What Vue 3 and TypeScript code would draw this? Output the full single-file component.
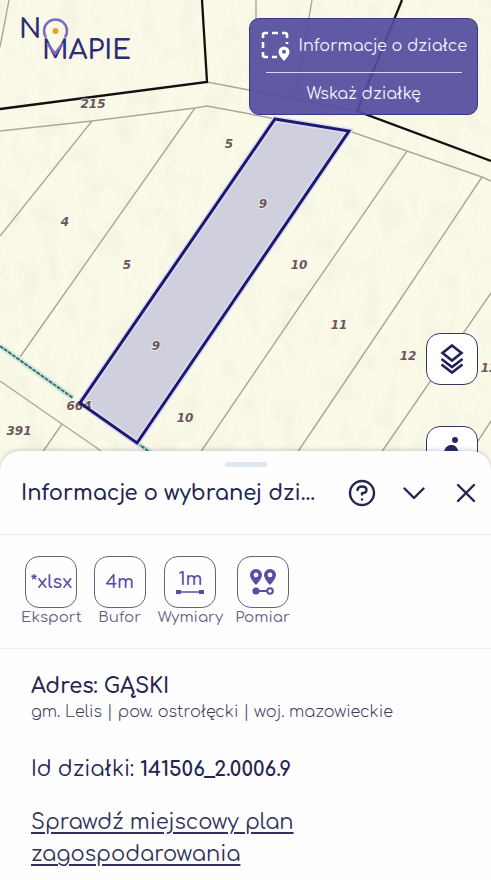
<script setup lang="ts">
interface MapLabel {
  text: string
  x: number
  y: number
}

interface Tool {
  id: string
  label: string
  glyph?: string
}

const boundaries: string[] = [
  'M9 0L0 47',
  'M256 0V22',
  'M312 0L295 98',
  'M207 82L249 90L357 111',
  'M0 131L92 121L195 108L207 106L245 113L275 119L349 131L407 151L482 177L491 181',
  'M92 121L0 236',
  'M195 108L60 300L20 357',
  'M407 151L304 300L200 453L170 500',
  'M482 177L400 300L297 453L265 500',
  'M491 293L381 453L350 500',
  'M491 421L440 500',
  'M0 381L62 424L97 448L160 500',
  'M62 424L42 453L10 500',
]

const labels: MapLabel[] = [
  { text: '215', x: 93, y: 108 },
  { text: '5', x: 229, y: 148 },
  { text: '4', x: 65, y: 226 },
  { text: '5', x: 127, y: 269 },
  { text: '9', x: 263, y: 208 },
  { text: '10', x: 299, y: 269 },
  { text: '11', x: 339, y: 329 },
  { text: '12', x: 408, y: 360 },
  { text: '13', x: 489, y: 372 },
  { text: '9', x: 156, y: 350 },
  { text: '664', x: 79, y: 410 },
  { text: '10', x: 185, y: 422 },
  { text: '391', x: 19, y: 435 },
  { text: '392', x: 87, y: 460 },
]

const tools: Tool[] = [
  { id: 'export', label: 'Eksport', glyph: '*xlsx' },
  { id: 'buffer', label: 'Bufor', glyph: '4m' },
  { id: 'dimensions', label: 'Wymiary' },
  { id: 'measure', label: 'Pomiar' },
]
</script>

<template>
  <main class="app">
    <section class="map" aria-label="Mapa działek">
      <svg class="map-canvas" viewBox="0 0 491 500" preserveAspectRatio="xMidYMin slice">
        <defs>
          <filter id="relief" x="0" y="0" width="100%" height="100%">
            <feTurbulence type="fractalNoise" baseFrequency="0.05 0.035" numOctaves="3" seed="4" />
            <feColorMatrix values="0 0 0 0 .55  0 0 0 0 .56  0 0 0 0 .48  .9 0 0 0 -.38" />
          </filter>
        </defs>
        <rect width="491" height="500" fill="#fbfae9" />
        <rect width="491" height="500" filter="url(#relief)" opacity=".35" />
        <path v-for="d in boundaries" :key="d" :d="d" class="boundary" />
        <path d="M0 109L207 82L202 0M402 0L357 111L491 161" class="district" />
        <path d="M0 346L73 398M137 443L160 459" class="stream-glow" />
        <path d="M0 346L73 398M137 443L160 459" class="stream" />
        <path d="M275 119L349 131L137 443L80 403Z" class="plot-glow" />
        <text v-for="l in labels" :key="l.text + l.x" :x="l.x" :y="l.y" class="map-label">{{ l.text }}</text>
        <path d="M275 119L349 131L137 443L80 403Z" class="plot" />
      </svg>

      <a class="logo" href="#" aria-label="Na mapie">
        <svg width="122" height="50" viewBox="0 0 122 50">
          <g class="logo-text">
            <text x="-1" y="23">N</text>
            <text x="22" y="44">MAPIE</text>
          </g>
          <path d="M26 22.500A11.500 11.500 0 1 1 45 22.500" fill="none" stroke="#7d6cc0" stroke-width="2.600" />
          <path d="M27 28L35 38.500L43 28" fill="none" stroke="#7d6cc0" stroke-width="2.600" />
          <circle cx="35.500" cy="16" r="3" fill="#e5a02c" />
        </svg>
      </a>

      <div class="mode">
        <button class="mode-info" type="button">
          <svg width="30" height="30" viewBox="0 0 30 30" fill="none" stroke="#fff" stroke-width="2.600">
            <path d="M2 7V4Q2 2 4 2H7M11 2H17M21 2H24Q26 2 26 4V7M26 11V13M2 11V17M2 21V24Q2 26 4 26H7M11 26H16" />
            <path fill="#fff" fill-rule="evenodd" stroke="none" d="M23 15.500A5.500 5.500 0 0 0 17.500 21C17.500 24.500 23 30 23 30S28.500 24.500 28.500 21A5.500 5.500 0 0 0 23 15.500ZM23 18.800A2 2 0 1 1 23 22.800A2 2 0 1 1 23 18.800Z" />
          </svg>
          Informacje o działce
        </button>
        <button class="mode-pick" type="button">Wskaż działkę</button>
      </div>

      <div class="map-buttons">
        <button class="tile" type="button" aria-label="Warstwy">
          <svg width="24" height="32" viewBox="0 0 24 32" fill="none" stroke="#1f2158" stroke-width="2.600">
            <path d="M12 2.500L21.500 10L12 17.500L2.500 10ZM1.500 16L12 24L22.500 16M1.500 21.500L12 29.500L22.500 21.500" />
          </svg>
        </button>
        <button class="tile" type="button" aria-label="Widok ulicy">
          <svg width="24" height="32" viewBox="0 0 24 32" fill="none" stroke="#26276b" stroke-width="3" stroke-linecap="round">
            <circle cx="15" cy="4" r="3" fill="#26276b" stroke="none" />
            <path d="M5 18Q6 10.500 12 10.500L17 17L21 18M12 12L10 20L15 25V30M9 22L5 30" />
            <path d="M4 18Q5 9 12 9Q17 9 19 17Z" fill="#26276b" stroke="none" />
          </svg>
        </button>
      </div>
    </section>

    <section class="sheet">
      <div class="handle"></div>
      <header class="head">
        <h1>Informacje o wybranej dzi...</h1>
        <div class="actions">
          <button type="button" aria-label="Pomoc">
            <svg width="28" height="28" viewBox="0 0 28 28">
              <circle cx="14" cy="14" r="12" />
              <path d="M9.500 11Q10 7.500 14 7.500Q18.500 7.500 18.500 11Q18.500 14 14 14.200V15.500M14 20.500V20.600" />
            </svg>
          </button>
          <button type="button" aria-label="Zwiń">
            <svg width="28" height="28" viewBox="0 0 28 28"><path d="M4.500 9.500L14 19L23.500 9.500" /></svg>
          </button>
          <button type="button" aria-label="Zamknij">
            <svg width="28" height="28" viewBox="0 0 28 28"><path d="M6 6L22 22M22 6L6 22" /></svg>
          </button>
        </div>
      </header>

      <div class="tools">
        <button v-for="tool in tools" :key="tool.id" class="tool" type="button">
          <span class="tool-box">
            <span v-if="tool.glyph">{{ tool.glyph }}</span>
            <span v-else-if="tool.id === 'dimensions'" class="ruler">
              1m
              <svg width="28" height="6" viewBox="0 0 28 6" fill="#5d4ba5">
                <path d="M0 1H5V5H0ZM23 1H28V5H23ZM5 2.300H23V3.700H5Z" />
              </svg>
            </span>
            <svg v-else width="28" height="28" viewBox="0 0 28 28" fill="#5d4ba5">
              <path fill-rule="evenodd" d="M7 1A6 6 0 0 0 1 7C1 11 7 17 7 17S13 11 13 7A6 6 0 0 0 7 1ZM7 4.500A2.400 2.400 0 1 1 7 9.300A2.400 2.400 0 1 1 7 4.500Z" />
              <path fill-rule="evenodd" d="M21 1A6 6 0 0 0 15 7C15 11 21 17 21 17S27 11 27 7A6 6 0 0 0 21 1ZM21 4.500A2.400 2.400 0 1 1 21 9.300A2.400 2.400 0 1 1 21 4.500Z" />
              <circle cx="7" cy="23" r="3.600" />
              <path d="M7 23H18" stroke="#5d4ba5" stroke-width="2" />
              <circle cx="21" cy="23" r="2.800" fill="#fff" stroke="#5d4ba5" stroke-width="2" />
            </svg>
          </span>
          <span class="tool-label">{{ tool.label }}</span>
        </button>
      </div>

      <div class="details">
        <h2>Adres: GĄSKI</h2>
        <p class="region">gm. Lelis | pow. ostrołęcki | woj. mazowieckie</p>
        <p class="plot-id">Id działki: <strong>141506_2.0006.9</strong></p>
        <a class="plan" href="#">Sprawdź miejscowy plan zagospodarowania</a>
      </div>
    </section>
  </main>
</template>

<style>
body {
  margin: 0;
}
</style>

<style scoped>
.app {
  display: flex;
  flex-direction: column;
  min-height: 100vh;
  overflow: hidden;
  background: #fbfae9;
  color: #23254f;
  font-family: Comfortaa, Quicksand, Lato, sans-serif;
}

button {
  margin: 0;
  padding: 0;
  border: 0;
  background: none;
  color: inherit;
  font: inherit;
  cursor: pointer;
}

svg {
  display: block;
  flex: none;
}

.map {
  position: relative;
  flex: 1;
  min-height: 320px;
}

.map-canvas {
  position: absolute;
  inset: 0;
  width: 100%;
  height: 100%;
}

.boundary {
  fill: none;
  stroke: #a9a89b;
  stroke-width: 1.400;
}

.district {
  fill: none;
  stroke: #11110f;
  stroke-width: 2.300;
}

.stream-glow {
  fill: none;
  stroke: #d3ebe2;
  stroke-width: 6;
}

.stream {
  fill: none;
  stroke: #3f6f60;
  stroke-width: 2;
  stroke-dasharray: 4 1;
}

.plot-glow {
  fill: #d0cfde;
  stroke: #dcdcf8;
  stroke-width: 6;
}

.plot {
  fill: none;
  stroke: #1d1b69;
  stroke-width: 3;
}

.map-label {
  fill: #6b5660;
  stroke: #fbfae9;
  stroke-width: 2;
  stroke-opacity: 0.6;
  paint-order: stroke;
  font: italic bold 12px "DejaVu Sans", sans-serif;
  text-anchor: middle;
}

.logo {
  position: absolute;
  top: 15px;
  left: 20px;
}

.logo-text {
  fill: #2b2c74;
  font-size: 27px;
  font-weight: 600;
}

.mode {
  position: absolute;
  top: 18px;
  right: 13px;
  display: flex;
  flex-direction: column;
  box-sizing: border-box;
  padding: 0 10px 0 11px;
  border: 1px solid #3d3884;
  border-radius: 10px;
  background: rgba(84, 76, 158, 0.93);
  color: #f4f2ff;
  font-size: 16px;
}

.mode-info {
  display: flex;
  align-items: center;
  gap: 8px;
  height: 53px;
}

.mode-pick {
  height: 42px;
  margin: 0 5px;
  border-top: 1px solid #d9d5f2;
}

.map-buttons {
  position: absolute;
  top: 333px;
  right: 13px;
  display: grid;
  gap: 41px;
}

.tile {
  display: grid;
  place-items: center;
  box-sizing: border-box;
  width: 52px;
  height: 52px;
  border: 1px solid #36365f;
  border-radius: 14px;
  background: #fff;
}

.sheet {
  position: relative;
  margin-top: -20px;
  padding-top: 11px;
  border-radius: 20px 20px 0 0;
  background: #fefefe;
  box-shadow: 0 -1px 4px rgba(60, 60, 120, 0.25);
}

.handle {
  width: 42px;
  height: 5px;
  margin: 0 auto;
  border-radius: 2px;
  background: #dfe7ec;
}

.head {
  display: flex;
  align-items: center;
  justify-content: space-between;
  box-sizing: border-box;
  height: 68px;
  padding: 0 11px 16px 21px;
}

.head,
.tools {
  border-bottom: 1px solid #ebebee;
}

h1 {
  margin: 0;
  font-size: 21px;
  font-weight: 600;
  white-space: nowrap;
}

.actions {
  display: flex;
  gap: 24px;
}

.actions svg {
  fill: none;
  stroke: #23254f;
  stroke-width: 2.400;
  stroke-linecap: round;
  stroke-linejoin: round;
}

.tools {
  display: flex;
  gap: 12px;
  padding: 21px 21px 20px;
}

.tool {
  display: flex;
  flex-direction: column;
  align-items: center;
  min-width: 52px;
}

.tool-box {
  display: grid;
  place-items: center;
  box-sizing: border-box;
  width: 52px;
  height: 52px;
  border: 1px solid #65627f;
  border-radius: 14px;
  color: #5d4ba5;
  font-size: 18px;
  font-weight: 600;
  line-height: 20px;
}

.ruler {
  display: grid;
  justify-items: center;
}

.tool-label {
  color: #65627f;
  font-size: 15px;
  line-height: 20px;
}

.details {
  padding: 25px 31px 10px;
}

h2 {
  margin: 0;
  font-size: 21px;
  font-weight: 600;
  line-height: 24px;
}

p {
  margin: 0;
}

.region {
  color: #3b3c58;
  font-size: 16px;
  font-weight: 300;
  line-height: 28px;
}

.plot-id {
  margin: 27px 0 20px;
  font-size: 21px;
  line-height: 32px;
}

.plot-id strong {
  font-size: 20px;
}

.plan {
  display: block;
  max-width: 290px;
  color: #303258;
  font-size: 21px;
  line-height: 32px;
  text-underline-offset: 3px;
}
</style>
